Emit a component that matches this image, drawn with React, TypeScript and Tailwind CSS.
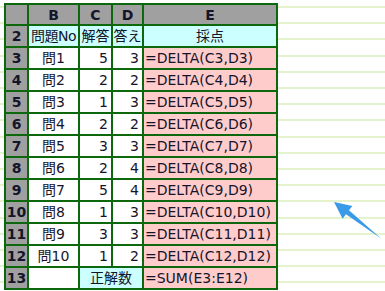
const rows = [
  { q: '問1', a: 5, c: 3 },
  { q: '問2', a: 2, c: 2 },
  { q: '問3', a: 1, c: 3 },
  { q: '問4', a: 2, c: 2 },
  { q: '問5', a: 3, c: 3 },
  { q: '問6', a: 2, c: 4 },
  { q: '問7', a: 5, c: 4 },
  { q: '問8', a: 1, c: 3 },
  { q: '問9', a: 3, c: 3 },
  { q: '問10', a: 1, c: 2 },
];

const rowHead = 'bg-[#a0a0a0] font-bold flex items-center justify-center';

export default function App() {
  return (
    <div className="relative w-[385px] h-[291px] overflow-hidden bg-white bg-[repeating-linear-gradient(to_bottom,transparent_0px,transparent_6px,#e4f3cc_6px,#e4f3cc_8px,transparent_8px,transparent_16.2px)] font-['DejaVu_Sans','Noto_Sans_CJK_JP',sans-serif] text-[14px] text-[#14142a] leading-none">
      <div className="ml-[4px] mt-[3px] inline-grid grid-cols-[21px_49px_31px_29px_132px] grid-rows-[19px_repeat(12,20px)] gap-[2px] p-[2px] bg-[#0d680d]">
        {/* header */}
        <div className="bg-[#a0a0a0]" />
        {['B', 'C', 'D', 'E'].map(h => (
          <div key={h} className="bg-[#a0a0a0] font-bold flex items-center justify-center">{h}</div>
        ))}

        {/* row 2 */}
        <div className={rowHead}>2</div>
        <div className="bg-[#ccffff] flex items-center justify-center tracking-[-0.5px]">問題No</div>
        <div className="bg-[#ccffff] flex items-center justify-center">解答</div>
        <div className="bg-[#ccffff] flex items-center justify-center">答え</div>
        <div className="bg-[#ccffff] flex items-center justify-center">採点</div>

        {rows.map((r, i) => (
          <div key={i} className="contents">
            <div className={rowHead}>{i + 3}</div>
            <div className="bg-white flex items-center justify-center">{r.q}</div>
            <div className="bg-white flex items-center justify-end pr-[3px]">{r.a}</div>
            <div className="bg-white flex items-center justify-end pr-[3px]">{r.c}</div>
            <div className="bg-[#ffcccc] flex items-center pl-[1px] whitespace-nowrap">=DELTA(C{i + 3},D{i + 3})</div>
          </div>
        ))}

        {/* row 13 */}
        <div className={rowHead}>13</div>
        <div className="bg-white" />
        <div className="col-span-2 bg-[#ccffff] flex items-center justify-center">正解数</div>
        <div className="bg-[#ffcccc] flex items-center pl-[1px]">=SUM(E3:E12)</div>
      </div>

      <svg className="absolute left-0 top-0" width="385" height="291" viewBox="0 0 385 291">
        <polygon
          points="334,202 352.4,205.9 349,210.3 381,238.5 346,214.3 342.6,218.7"
          fill="#3a9ae8"
        />
      </svg>
    </div>
  );
}
